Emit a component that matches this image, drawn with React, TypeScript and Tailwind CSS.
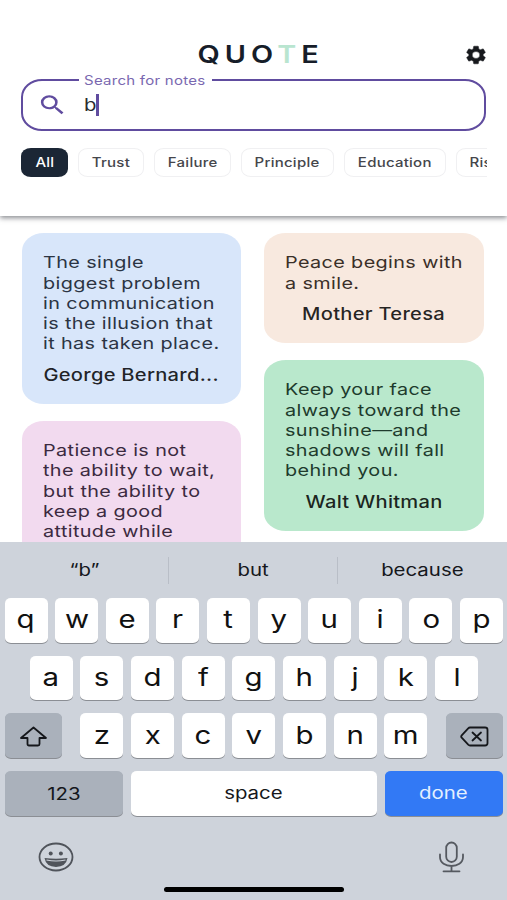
import React from 'react'
import { clsx } from 'clsx'

type Quote = { lines: string[]; author?: string; color: string; text: string }

const chips = [
    { label: "All", width: "w-[47px]" },
    { label: "Trust", width: "w-[66px]" },
    { label: "Failure", width: "w-[77px]" },
    { label: "Principle", width: "w-[93px]" },
    { label: "Education", width: "w-[102px]" },
    { label: "Risk", width: "w-[57px]" },
];

const leftQuotes: Quote[] = [
    {
        lines: ["The single", "biggest problem", "in communication", "is the illusion that", "it has taken place."],
        author: "George Bernard...",
        color: "bg-[#d8e6fa]",
        text: "text-[#2b3443]",
    },
    {
        lines: ["Patience is not", "the ability to wait,", "but the ability to", "keep a good", "attitude while"],
        color: "bg-[#f2daef]",
        text: "text-[#3b2a40]",
    },
];

const rightQuotes: Quote[] = [
    {
        lines: ["Peace begins with", "a smile."],
        author: "Mother Teresa",
        color: "bg-[#f8e9df]",
        text: "text-[#3a2f28]",
    },
    {
        lines: ["Keep your face", "always toward the", "sunshine—and", "shadows will fall", "behind you."],
        author: "Walt Whitman",
        color: "bg-[#b9e8cc]",
        text: "text-[#1e3b2c]",
    },
];

function Wide({ children, className }: { children: React.ReactNode; className?: string }) {
    return <span className={clsx("inline-block whitespace-nowrap scale-x-[1.2]", className)}>{children}</span>
}

function QuoteCard({ quote }: { quote: Quote }) {
    return (
        <div className={clsx("w-[219.5px] rounded-[22px/18px] px-[21px] pt-[19px] pb-[19px]", quote.color, quote.text)}>
            {quote.lines.map((line) => (
                <div key={line} className="h-[20.25px] text-[16.5px] leading-[20.25px] tracking-[0.32px]">
                    <Wide className="origin-left">{line}</Wide>
                </div>
            ))}
            {quote.author && (
                <div className="mt-[11px] flex h-5 justify-center text-[16.8px] leading-5 font-medium tracking-[0.22px] text-black/85">
                    <Wide>{quote.author}</Wide>
                </div>
            )}
        </div>
    )
}

function Key({ children, className }: { children: React.ReactNode; className?: string }) {
    return (
        <div className={clsx("flex h-[44.5px] items-center justify-center rounded-[6px/5px] shadow-[0_1px_0.5px_#8b8e94]", className)}>
            {children}
        </div>
    )
}

function Letters({ letters }: { letters: string }) {
    return (
        <>
            {letters.split("").map((letter) => (
                <Key key={letter} className="w-[43px] bg-white text-[24.5px] text-[#111]">
                    <Wide className="-mt-px">{letter}</Wide>
                </Key>
            ))}
        </>
    )
}

function Header() {
    return (
        <header className="relative z-10 flex h-[216px] shrink-0 flex-col bg-white pt-[42px] shadow-[0_2px_5px_rgba(60,64,72,0.6)]">
            <div className="grid h-6 grid-cols-[1fr_auto_1fr] items-center">
                <div />
                <h1 className="flex pl-[15px] text-[24px] leading-[25px] font-semibold tracking-[4.2px] text-[#161d29]">
                    <Wide>QUO<span className="text-[#b9e5d0]">T</span>E</Wide>
                </h1>
                <svg className="mr-[19px] h-[22px] w-6 justify-self-end" viewBox="0 0 24 24" preserveAspectRatio="none" fill="#17191d" stroke="#17191d" strokeWidth="0.5">
                    <path d="M19.14 12.94c.04-.3.06-.61.06-.94 0-.32-.02-.64-.07-.94l2.03-1.58c.18-.14.23-.41.12-.61l-1.92-3.32c-.12-.22-.37-.29-.59-.22l-2.39.96c-.5-.38-1.03-.7-1.62-.94l-.36-2.54c-.04-.24-.24-.41-.48-.41h-3.84c-.24 0-.43.17-.47.41l-.36 2.54c-.59.24-1.13.57-1.62.94l-2.39-.96c-.22-.08-.47 0-.59.22L2.74 8.87c-.12.21-.08.47.12.61l2.03 1.58c-.05.3-.09.63-.09.94s.02.64.07.94l-2.03 1.58c-.18.14-.23.41-.12.61l1.92 3.32c.12.22.37.29.59.22l2.39-.96c.5.38 1.03.7 1.62.94l.36 2.54c.05.24.24.41.48.41h3.84c.24 0 .44-.17.47-.41l.36-2.54c.59-.24 1.13-.56 1.62-.94l2.39.96c.22.08.47 0 .59-.22l1.92-3.32c.12-.22.07-.47-.12-.61l-2.01-1.58zM12 15.8a3.8 3.8 0 0 1-3.8-3.8 3.8 3.8 0 0 1 3.8-3.8 3.8 3.8 0 0 1 3.8 3.8 3.8 3.8 0 0 1-3.8 3.8z" />
                </svg>
            </div>

            <div className="relative mx-[21px] mt-[13px] flex h-[52px] shrink-0 items-center rounded-[21px/18px] border-[2.5px] border-[#604c9f] pl-[14px]">
                <span className="absolute top-[-10.5px] left-[56px] h-5 w-[133px] bg-white pl-[5px] text-[12.5px] leading-5 tracking-[0.22px] text-[#7a68b0]">
                    <Wide className="origin-left">Search for notes</Wide>
                </span>
                <svg className="h-[26px] w-[31px]" viewBox="0 0 24 24" preserveAspectRatio="none" fill="#604c9f">
                    <path d="M15.5 14h-.79l-.28-.27A6.47 6.47 0 0 0 16 9.5 6.5 6.5 0 1 0 9.5 16c1.61 0 3.09-.59 4.23-1.57l.27.28v.79l5 4.99L20.49 19l-4.99-5zm-6 0C7.01 14 5 11.99 5 9.5S7.01 5 9.5 5 14 7.01 14 9.5 11.99 14 9.5 14z" />
                </svg>
                <span className="ml-[16px] w-[12px] pt-px text-[17px] text-[#2b2b30]">
                    <Wide className="origin-left">b</Wide>
                </span>
                <span className="h-[22px] w-[2.5px] bg-[#604c9f]" />
            </div>

            <div className="mr-5 ml-[21px] mt-[17px] flex gap-[10px] overflow-hidden">
                {chips.map((chip, index) => (
                    <div
                        key={chip.label}
                        className={clsx(
                            "flex h-[29px] shrink-0 items-center justify-center rounded-[10px/8px] text-[12.5px] font-medium tracking-[0.2px]",
                            chip.width,
                            index === 0 ? "bg-[#1b2635] text-white" : "border border-[#f0f0f2] text-[#45464b]"
                        )}
                    >
                        <Wide className="mt-px">{chip.label}</Wide>
                    </div>
                ))}
            </div>
        </header>
    )
}

function Keyboard() {
    return (
        <div className="relative z-10 flex h-[358px] shrink-0 flex-col bg-[#ced3db] text-[#15171b]">
            <div className="flex h-[56px] items-center text-[17px]">
                <div className="flex w-[168px] justify-center pt-[2px] pl-px"><Wide>“b”</Wide></div>
                <div className="h-[27px] w-px bg-[#b9bec7]" />
                <div className="flex w-[168px] justify-center pt-[2px] pl-px"><Wide>but</Wide></div>
                <div className="h-[27px] w-px bg-[#b9bec7]" />
                <div className="flex flex-1 justify-center pt-[2px]"><Wide>because</Wide></div>
            </div>
            <div className="flex flex-col gap-[13.2px] pr-1 pl-[4.5px]">
                <div className="flex justify-between"><Letters letters="qwertyuiop" /></div>
                <div className="flex justify-between px-[25px]"><Letters letters="asdfghjkl" /></div>
                <div className="flex justify-between">
                    <Key className="w-[57px] bg-[#aab1bb]">
                        <svg className="mt-[2px] h-[21px] w-[29px]" viewBox="0 0 29 21" fill="none" stroke="#15171b" strokeWidth="1.8" strokeLinejoin="round">
                            <path d="M14.5 1.5 L27 12 H20.5 V18 Q20.5 19.5 19 19.5 H10 Q8.5 19.5 8.5 18 V12 H2 Z" />
                        </svg>
                    </Key>
                    <div className="flex gap-[7.7px]"><Letters letters="zxcvbnm" /></div>
                    <Key className="w-[57px] bg-[#aab1bb]">
                        <svg className="mt-px h-[21px] w-[29px]" viewBox="0 0 29 21" fill="none" stroke="#15171b" strokeWidth="1.8" strokeLinecap="round" strokeLinejoin="round">
                            <path d="M10 1.5 H25 Q27.5 1.5 27.5 3.7 V17.3 Q27.5 19.5 25 19.5 H10 Q9 19.5 8.2 18.7 L1.7 11.7 Q0.7 10.5 1.7 9.3 L8.2 2.3 Q9 1.5 10 1.5 Z" />
                            <path d="M12.5 6.5 L21 14.5 M21 6.5 L12.5 14.5" />
                        </svg>
                    </Key>
                </div>
                <div className="flex justify-between text-[17px]">
                    <Key className="w-[118.5px] bg-[#aab1bb]"><Wide className="mt-[2px]">123</Wide></Key>
                    <Key className="w-[246px] bg-white"><Wide>space</Wide></Key>
                    <Key className="w-[118.5px] bg-[#3279f5] text-[#e4f0ff]"><Wide>done</Wide></Key>
                </div>
            </div>
            <div className="mt-[25px] flex items-center justify-between pr-[42px] pl-[38px]">
                <svg className="h-[30px] w-9" viewBox="0 0 36 30" fill="none" stroke="#50545b" strokeWidth="1.8">
                    <ellipse cx="18" cy="15" rx="16.5" ry="13.5" />
                    <ellipse cx="12.7" cy="11.5" rx="2" ry="1.9" fill="#50545b" stroke="none" />
                    <ellipse cx="22.9" cy="11.5" rx="2" ry="1.9" fill="#50545b" stroke="none" />
                    <path d="M6.5 16 Q18 17.6 29.5 16 Q28 24.8 18 25 Q8 24.8 6.5 16 Z" fill="#50545b" stroke="none" />
                    <path d="M8.5 18 Q18 20 27.5 18" stroke="#ced3db" strokeWidth="1.2" />
                </svg>
                <svg className="h-[32px] w-[27px]" viewBox="0 0 27 32" fill="none" stroke="#555960" strokeWidth="1.8" strokeLinecap="round">
                    <rect x="8.2" y="1.5" width="10.6" height="19.5" rx="5.3" />
                    <path d="M2 13.5 V16 C2 28 25 28 25 16 V13.5 M13.5 25 V30 M5.5 30.3 H21.5" />
                </svg>
            </div>
            <div className="mx-auto mt-auto mb-[8px] h-[5.5px] w-[180px] rounded-full bg-black" />
        </div>
    )
}

export default function App() {
    return (
        <div className="flex h-[900px] w-[507px] flex-col overflow-hidden bg-white font-['Inter',sans-serif]">
            <Header />
            <main className="flex min-h-0 flex-1 gap-[23px] overflow-hidden pt-[17.3px] pl-[21.5px]">
                <div className="flex flex-col gap-[17.5px]">
                    {leftQuotes.map((quote) => <QuoteCard key={quote.lines[0]} quote={quote} />)}
                </div>
                <div className="flex flex-col gap-[17.5px]">
                    {rightQuotes.map((quote) => <QuoteCard key={quote.lines[0]} quote={quote} />)}
                </div>
            </main>
            <Keyboard />
        </div>
    )
}
